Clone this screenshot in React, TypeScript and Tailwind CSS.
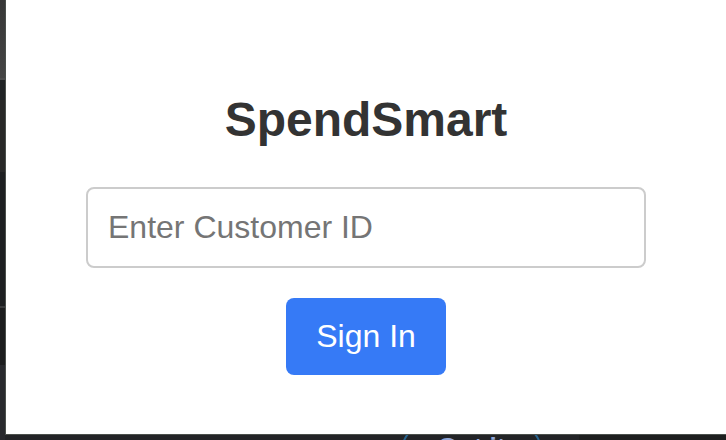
import { useState } from "react";

function Backdrop() {
  return (
    <div className="flex w-[5px] shrink-0 flex-col bg-[#28292d]" aria-hidden="true">
      <div className="h-[78px] bg-linear-to-b from-[#373737] to-[#444444]" />
      <div className="h-[2px] bg-[#4c4c4c]" />
      <div className="h-5 bg-[#202325]" />
      <div className="h-[72px] bg-[#282828]" />
      <div className="h-[134px] bg-[#1d1f21]" />
      <div className="h-[2px] bg-[#3a3b3c]" />
      <div className="h-[57px] bg-[#1c1d1e]" />
    </div>
  );
}

function SignInForm() {
  const [customerId, setCustomerId] = useState("");

  return (
    <form
      className="flex flex-col items-center px-20 pt-[92px] pb-[59px]"
      onSubmit={(event) => event.preventDefault()}
    >
      <h1 className="text-5xl leading-[55px] font-bold text-[#333333]">SpendSmart</h1>
      <input
        type="text"
        aria-label="Customer ID"
        placeholder="Enter Customer ID"
        value={customerId}
        onChange={(event) => setCustomerId(event.target.value)}
        className="mt-10 h-[81px] w-full rounded-lg border-2 border-[#cccccc] bg-white px-5 text-[32px] text-[#333333] placeholder:text-[#757575]"
      />
      <button
        type="submit"
        className="mt-[30px] h-[77px] rounded-lg bg-[#367af6] px-[30px] pb-0.5 text-[32px] text-white"
      >
        Sign In
      </button>
    </form>
  );
}

export default function App() {
  return (
    <div className="flex h-screen flex-col overflow-hidden bg-[#212325] font-['Liberation_Sans',Arial,sans-serif]">
      <div className="flex">
        <Backdrop />
        <div className="min-w-0 flex-1">
          <main className="border-b border-l border-[#4b504c] bg-white">
            <SignInForm />
          </main>
          <div className="flex h-[5px] overflow-hidden">
            <div className="flex flex-1 justify-end bg-[#232427] pr-[38px]">
              <button
                type="button"
                className="-mt-2 h-10 w-[139px] shrink-0 rounded-full border-2 border-[#28648f] text-[26px] leading-9 font-bold text-[#91a7d8]"
              >
                Got it
              </button>
            </div>
            <div className="w-[147px] bg-[#1e1f1f]" />
          </div>
        </div>
      </div>
    </div>
  );
}
